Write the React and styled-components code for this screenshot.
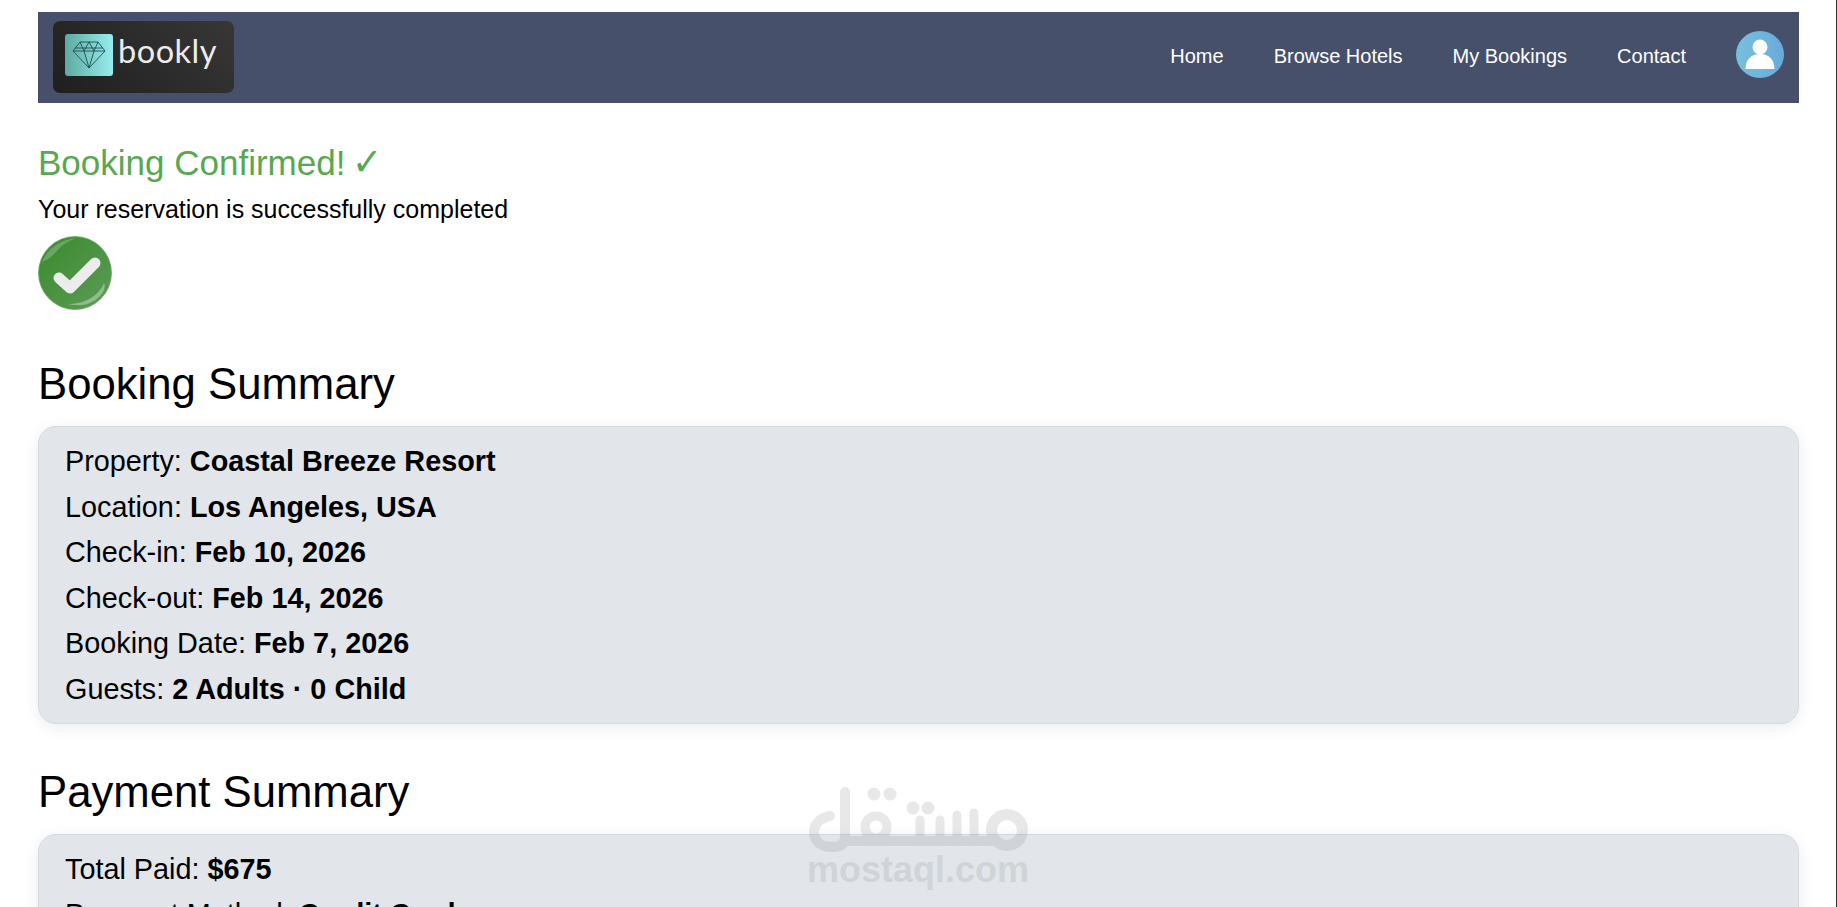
import React from "react";
import styled, { createGlobalStyle } from "styled-components";

const Global = createGlobalStyle`
  html, body { margin: 0; padding: 0; background: #fff; height: 907px; overflow: hidden; }
  body { font-family: "Liberation Sans", Arial, sans-serif; color: #000; }
`;
const Page = styled.div`
  position: relative;
  height: 907px;
  overflow: hidden;
  padding: 12px 37px 0 38px;
  box-sizing: border-box;
  border-right: 1px solid #2c2c2c;
`;
const Header = styled.header`
  display: flex;
  align-items: center;
  justify-content: space-between;
  height: 91px;
  background: #46506a;
  padding: 0 15px;
`;
const Logo = styled.div`
  display: flex;
  align-items: center;
  width: 181px;
  height: 72px;
  margin-bottom: 1px;
  box-sizing: border-box;
  padding: 0 0 4px 12px;
  border-radius: 7px;
  background: linear-gradient(45deg, #1f1f20, #373737);
`;
const LogoTile = styled.div`
  display: flex;
  align-items: center;
  justify-content: center;
  width: 48px;
  height: 42px;
  border-radius: 3px;
  background: linear-gradient(90deg, #5eaaa2, #97eded);
`;
const LogoWord = styled.span`
  font-family: "Lato", sans-serif;
  font-size: 32.5px;
  line-height: 40px;
  color: #ececec;
  margin: 0 0 8px 5px;
  letter-spacing: 0.5px;
`;
const Nav = styled.nav`
  display: flex;
  align-items: center;
  gap: 50px;
`;
const NavLink = styled.a`
  color: #fff;
  font-size: 20px;
  margin-bottom: 2px;
`;
const Avatar = styled.div`
  width: 48px;
  height: 47px;
  margin-bottom: 6px;
  border-radius: 50%;
  overflow: hidden;
  background: linear-gradient(90deg, #78c0dc, #68aadc);
`;
const Confirmed = styled.h2`
  margin: 41px 0 0;
  font-size: 35px;
  line-height: 37px;
  font-weight: 400;
  color: #58a84f;
`;
const Tick = styled.span`
  display: inline-block;
  margin-left: -4px;
  font-size: 38px;
  line-height: 37px;
  transform: scaleX(0.95);
`;
const Sub = styled.p`
  margin: 14px 0 0;
  font-size: 25px;
  line-height: 28px;
`;
const Badge = styled.div`
  width: 74px;
  height: 74px;
  margin-top: 13px;
  padding-bottom: 6px;
`;
const SectionTitle = styled.h1`
  margin: 43px 0 0;
  font-size: 43.7px;
  line-height: 50px;
  font-weight: 400;
`;
const Card = styled.section`
  display: flex;
  flex-direction: column;
  gap: 12.5px;
  margin-top: 17px;
  padding: 18px 26px 17px;
  background: #e2e6ea;
  border: 1px solid #d3d9df;
  border-radius: 18px;
  box-shadow: 0 3px 16px rgba(0, 0, 0, 0.08);
`;
const Row = styled.div`
  font-size: 28.8px;
  line-height: 33px;
  b { font-weight: 700; }
`;
const Watermark = styled.div`
  position: absolute;
  left: 808px;
  top: 787px;
  width: 220px;
  display: flex;
  flex-direction: column;
  align-items: center;
  pointer-events: none;
  opacity: 0.17;
`;
const WatermarkText = styled.span`
  font-family: "Liberation Sans", sans-serif;
  font-weight: 700;
  font-size: 36px;
  line-height: 36px;
  color: #7a7d80;
  white-space: nowrap;
`;

const Diamond = () => (
  <svg width="34" height="30" viewBox="0 0 34 30" fill="none" stroke="#1c4e50" strokeWidth="0.9">
    <path d="M8 2h18l7 9-16 17L1 11z" />
    <path d="M1 11h32M8 2l4 9 5-9 5 9 4-9M12 11l5 17 5-17M3 8h28" />
  </svg>
);

const User = () => (
  <svg width="48" height="47" viewBox="0 0 48 47">
    <circle cx="24" cy="16" r="7.5" fill="#fff" />
    <path d="M9.500 38c0-9 5.500-15 14.500-15s14.500 6 14.500 15z" fill="#fff" />
  </svg>
);

const CheckBadge = () => (
  <svg width="74" height="74" viewBox="0 0 74 74">
    <defs>
      <linearGradient id="gb" x1="0" y1="0" x2="1" y2="1">
        <stop offset="0" stopColor="#3a8a2e" />
        <stop offset="1" stopColor="#5c9c56" />
      </linearGradient>
    </defs>
    <circle cx="37" cy="37" r="36.500" fill="url(#gb)" stroke="#6aa765" strokeWidth="0.8" />
    <path d="M4 26C10 12 22 4 38 2 30 5 24 9 18 16 14 21 9 24 4 26z" fill="#fff" opacity="0.22" />
    <path d="M30 68c14 0 30-6 36-21 2 4 0 9-5 14-8 8-20 10-31 7z" fill="#fff" opacity="0.35" />
    <path d="M21 42l11 10 25-25" fill="none" stroke="#ececec" strokeWidth="11" strokeLinecap="round" strokeLinejoin="round" />
  </svg>
);

const MostaqlMark = () => (
  <svg width="220" height="65" viewBox="0 0 220 65" fill="none" stroke="#7a7d80" strokeWidth="10" strokeLinecap="round">
    <path d="M22 29C11 31 6 38 6 45c0 10 8 15 18 15 7 0 13-2 13-10V5" />
    <path d="M37 54H186" />
    <circle cx="68" cy="40" r="11" strokeWidth="9" />
    <path d="M112 33V54M132 33V54M149 28V54M166 26V54" strokeWidth="9" />
    <circle cx="199" cy="43" r="15.500" strokeWidth="11" />
    <g fill="#7a7d80" stroke="none">
      <circle cx="66" cy="7" r="6.500" /><circle cx="82" cy="7" r="6.500" />
      <circle cx="105" cy="21" r="6.500" /><circle cx="120" cy="21" r="6.500" />
    </g>
  </svg>
);

const bookingRows = [
  ["Property", "Coastal Breeze Resort"],
  ["Location", "Los Angeles, USA"],
  ["Check-in", "Feb 10, 2026"],
  ["Check-out", "Feb 14, 2026"],
  ["Booking Date", "Feb 7, 2026"],
  ["Guests", "2 Adults · 0 Child"],
];
const paymentRows = [
  ["Total Paid", "$675"],
  ["Payment Method", "Credit Card"],
];

export default function App() {
  return (
    <Page>
      <Global />
      <Header>
        <Logo>
          <LogoTile><Diamond /></LogoTile>
          <LogoWord>bookly</LogoWord>
        </Logo>
        <Nav>
          {["Home", "Browse Hotels", "My Bookings", "Contact"].map((n) => <NavLink key={n}>{n}</NavLink>)}
          <Avatar><User /></Avatar>
        </Nav>
      </Header>
      <Confirmed>Booking Confirmed! <Tick>✓</Tick></Confirmed>
      <Sub>Your reservation is successfully completed</Sub>
      <Badge><CheckBadge /></Badge>
      <SectionTitle>Booking Summary</SectionTitle>
      <Card>
        {bookingRows.map(([k, v]) => <Row key={k}>{k}: <b>{v}</b></Row>)}
      </Card>
      <SectionTitle>Payment Summary</SectionTitle>
      <Card>
        {paymentRows.map(([k, v]) => <Row key={k}>{k}: <b>{v}</b></Row>)}
      </Card>
      <Watermark>
        <MostaqlMark />
        <WatermarkText>mostaql.com</WatermarkText>
      </Watermark>
    </Page>
  );
}
